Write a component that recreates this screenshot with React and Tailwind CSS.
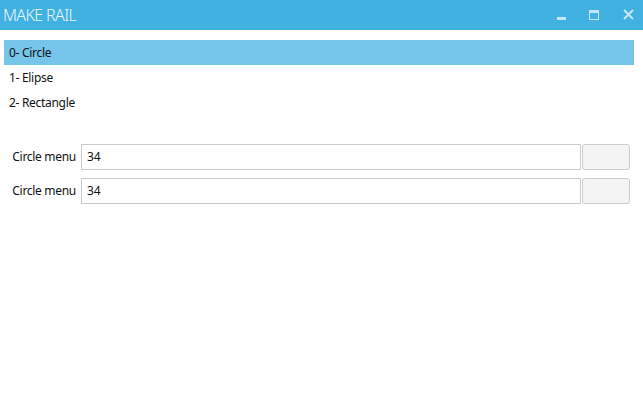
export default function App() {
  const font = { fontFamily: '"Segoe UI", "Noto Sans", "Open Sans", sans-serif' };
  return (
    <div className="w-[643px] h-[409px] bg-white overflow-hidden" style={font}>
      <div className="h-[30px] bg-[#41b1e1] flex items-center relative">
        <span className="pl-[3px] text-[16px] font-light text-[#eaf6fc] leading-none tracking-[-0.6px]">MAKE RAIL</span>
        <div className="ml-auto flex items-center h-full">
          <div className="w-[33px] h-full relative">
            <div className="absolute left-[15px] top-[17px] w-[9px] h-[3px] bg-[#c4e6f6]" />
          </div>
          <div className="w-[34px] h-full relative">
            <div className="absolute left-[14px] top-[10px] w-[10px] h-[10px] border border-[#c4e6f6] border-t-[3px]" />
          </div>
          <div className="w-[34px] h-full relative">
            <svg className="absolute left-[14px] top-[9px]" width="11" height="11" viewBox="0 0 11 11">
              <path d="M1 1 L10 10 M10 1 L1 10" stroke="#c4e6f6" strokeWidth="2" />
            </svg>
          </div>
        </div>
      </div>
      <div className="pt-[10px] px-[4px] pr-[9px]">
        <div className="h-[25px] bg-[#74c5e9] flex items-center pl-[5px] text-[12px] text-[#111] tracking-[-0.3px]">0- Circle</div>
        <div className="h-[25px] flex items-center pl-[5px] text-[12px] text-[#111] tracking-[-0.3px]">1- Elipse</div>
        <div className="h-[25px] flex items-center pl-[5px] text-[12px] text-[#111] tracking-[-0.3px]">2- Rectangle</div>
      </div>
      <div className="mt-[29px] flex flex-col gap-[8px] pr-[13px]">
        {[0, 1].map((i) => (
          <div key={i} className="flex h-[26px] items-center">
            <div className="w-[81px] text-right pr-[5px] text-[12px] text-[#111] whitespace-nowrap tracking-[-0.3px]">Circle menu</div>
            <div className="w-[500px] h-[26px] border border-[#cccccc] flex items-center pl-[5px] text-[12px] text-[#111]">34</div>
            <div className="flex-1 ml-[1px] h-[26px] border border-[#cccccc] bg-[#f4f4f4] rounded-[3px]" />
          </div>
        ))}
      </div>
    </div>
  );
}
